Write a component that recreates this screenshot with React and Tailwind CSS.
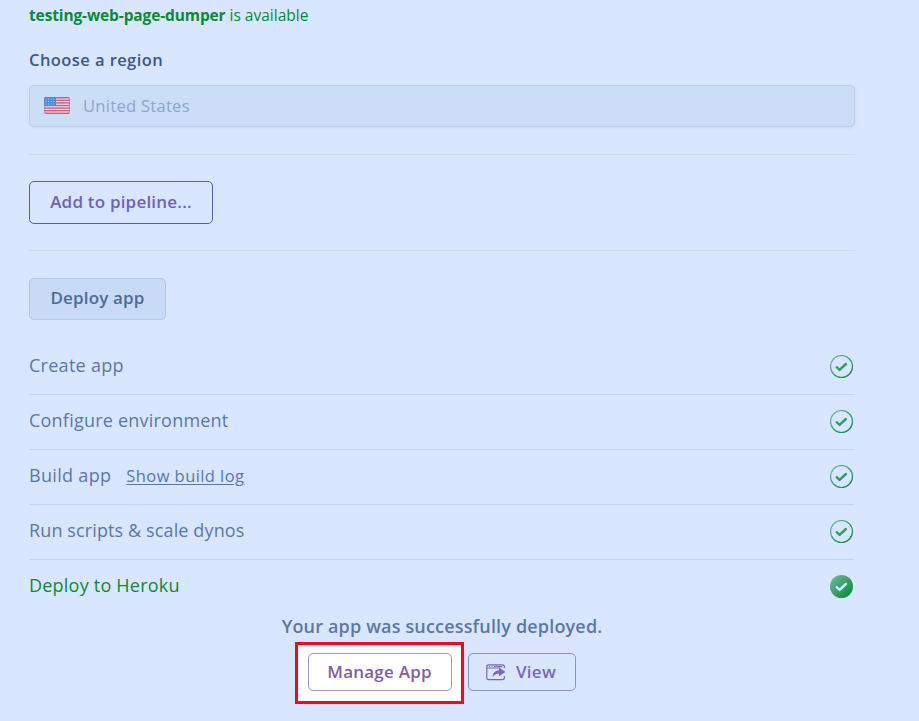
import React from 'react';

function CheckIcon({ id, filled }) {
  return (
    <svg width="24" height="24" viewBox="0 0 24 24" fill="none" className="mr-px shrink-0">
      <defs>
        <linearGradient id={id} x1="2" y1="2" x2="21" y2="22" gradientUnits="userSpaceOnUse">
          <stop offset="0" stopColor="#69b795" />
          <stop offset="1" stopColor="#088838" />
        </linearGradient>
      </defs>
      <circle cx="11.5" cy="11.5" r={filled ? 11.5 : 11} fill={filled ? `url(#${id})` : 'none'} stroke={filled ? 'none' : `url(#${id})`} strokeWidth="1.2" />
      <path d="M6.7 12.2L9.6 14.9L15.9 9" stroke={filled ? '#d8e6ff' : '#339c60'} strokeWidth="2.4" strokeLinecap="round" strokeLinejoin="round" />
    </svg>
  );
}

function Flag() {
  return (
    <svg width="26" height="17" viewBox="0 0 26 17" className="shrink-0">
      <defs>
        <clipPath id="flag-clip"><rect width="26" height="17" rx="2" /></clipPath>
      </defs>
      <g clipPath="url(#flag-clip)">
        <rect width="26" height="17" fill="#e4dfec" />
        {[0, 1, 2, 3, 4, 5, 6].map((i) => (
          <rect key={i} y={i * 2.6} width="26" height="1.4" fill="#cf5f7c" />
        ))}
        <rect width="12" height="9" fill="#438de0" />
        {[2, 4.5, 7].map((y) => [2, 4.6, 7.2, 9.8].map((x) => (
          <circle key={`${x}-${y}`} cx={x} cy={y} r="0.6" fill="#c5dcfa" />
        )))}
      </g>
      <rect x="0.5" y="0.5" width="25" height="16" rx="1.7" fill="none" stroke="#8a6f96" strokeOpacity="0.45" />
    </svg>
  );
}

function ViewIcon() {
  return (
    <svg width="20" height="17" viewBox="0 0 20 17" fill="none" className="shrink-0">
      <path d="M18.3 4V2.5Q18.3 .8 16.6 .8H2.5Q.8 .8 .8 2.5V14Q.8 15.7 2.5 15.7H16.6Q18.3 15.7 18.3 14V12" stroke="#7966ba" strokeWidth="1.2" />
      <path d="M1 4H14.5" stroke="#7966ba" strokeWidth="1" />
      <path d="M3 2.4H4M5.5 2.4H6.5M8 2.4H16.5" stroke="#7966ba" strokeWidth="1" />
      <path d="M13 3.6L19.4 8L13 12.2V9.6C10.4 9.6 8.4 10.8 6.6 13.2C6.7 9.2 9.2 6.5 13 6.2Z" fill="#7966ba" />
    </svg>
  );
}

function Step({ id, label, tracking, log, done }) {
  return (
    <li className={`flex items-center justify-between ${done ? 'h-[54px] text-[#088a37]' : 'h-[55px] border-b border-[#c1d3f2] text-[#5878a8]'}`}>
      <div className="flex items-baseline pb-1 text-[18px] leading-6">
        <span className={tracking}>{label}</span>
        {log && <a href="#log" className="ml-[15px] text-[16.5px] tracking-[0.42px] underline decoration-1 underline-offset-2">Show build log</a>}
      </div>
      <CheckIcon id={id} filled={done} />
    </li>
  );
}

export default function App() {
  return (
    <main className="h-[721px] w-[919px] overflow-hidden bg-[#d8e6ff] font-['Open_Sans',sans-serif]">
      <div className="ml-[29px] w-[826px]">
        <p className="pt-[3px] text-[15.5px] leading-6 whitespace-nowrap text-[#088a37]">
          <strong className="font-bold tracking-[-0.13px]">testing-web-page-dumper</strong> <span>is available</span>
        </p>
        <h2 className="mt-[21px] text-[16.5px] leading-6 font-semibold tracking-[0.43px] text-[#3e5884]">Choose a region</h2>
        <div className="mt-[13px] flex h-[42px] items-center gap-[13px] rounded-[5px] border border-[#b9cfef] bg-[#ccddf7] pb-px pl-[14px] text-[16.5px] text-[#8ca5cf] shadow-sm shadow-[#cadbf7]">
          <Flag />
          <span className="pt-[2px] tracking-[0.3px]">United States</span>
        </div>
        <hr className="mt-[27px] border-[#c8d9f6]" />
        <button className="mt-[26px] block h-[43px] w-[184px] rounded-[5px] border border-[#6558ab] pb-[2px] text-[17px] font-semibold tracking-[0.2px] text-[#7061b4]">Add to pipeline...</button>
        <hr className="mt-[26px] border-[#c8d9f6]" />
        <button className="mt-[27px] block h-[42px] w-[137px] rounded-[5px] border border-[#b0c8ed] bg-[#c8daf5] pb-[2px] text-[17px] font-semibold tracking-[0.15px] text-[#4c6b98]">Deploy app</button>
        <ul className="mt-5">
          <Step id="create" label="Create app" tracking="tracking-[0.27px]" />
          <Step id="configure" label="Configure environment" tracking="tracking-[0.22px]" />
          <Step id="build" label="Build app" tracking="tracking-[0.32px]" log />
          <Step id="scripts" label="Run scripts & scale dynos" tracking="tracking-[0.12px]" />
          <Step id="heroku" label="Deploy to Heroku" tracking="tracking-[0.22px]" done />
        </ul>
        <p className="text-center text-[18px] leading-6 font-semibold tracking-[0.17px] text-[#5878a8]">Your app was successfully deployed.</p>
        <div className="mt-1 ml-[266px] flex items-center gap-1">
          <div className="flex h-[62px] w-[169px] items-center justify-center border-[3px] border-[#ff0024] bg-white pb-[2px]">
            <button className="h-[38px] w-[144px] rounded-[5px] border border-[#ad91c3] text-[17px] font-semibold tracking-[0.23px] text-[#835ea4]">Manage App</button>
          </div>
          <button className="mb-[2px] flex h-[38px] w-[108px] items-center gap-[10px] rounded-[5px] border border-[#978cd0] pl-[17px] text-[17px] font-semibold tracking-[0.25px] text-[#7966ba]">
            <ViewIcon />
            <span>View</span>
          </button>
        </div>
      </div>
    </main>
  );
}
